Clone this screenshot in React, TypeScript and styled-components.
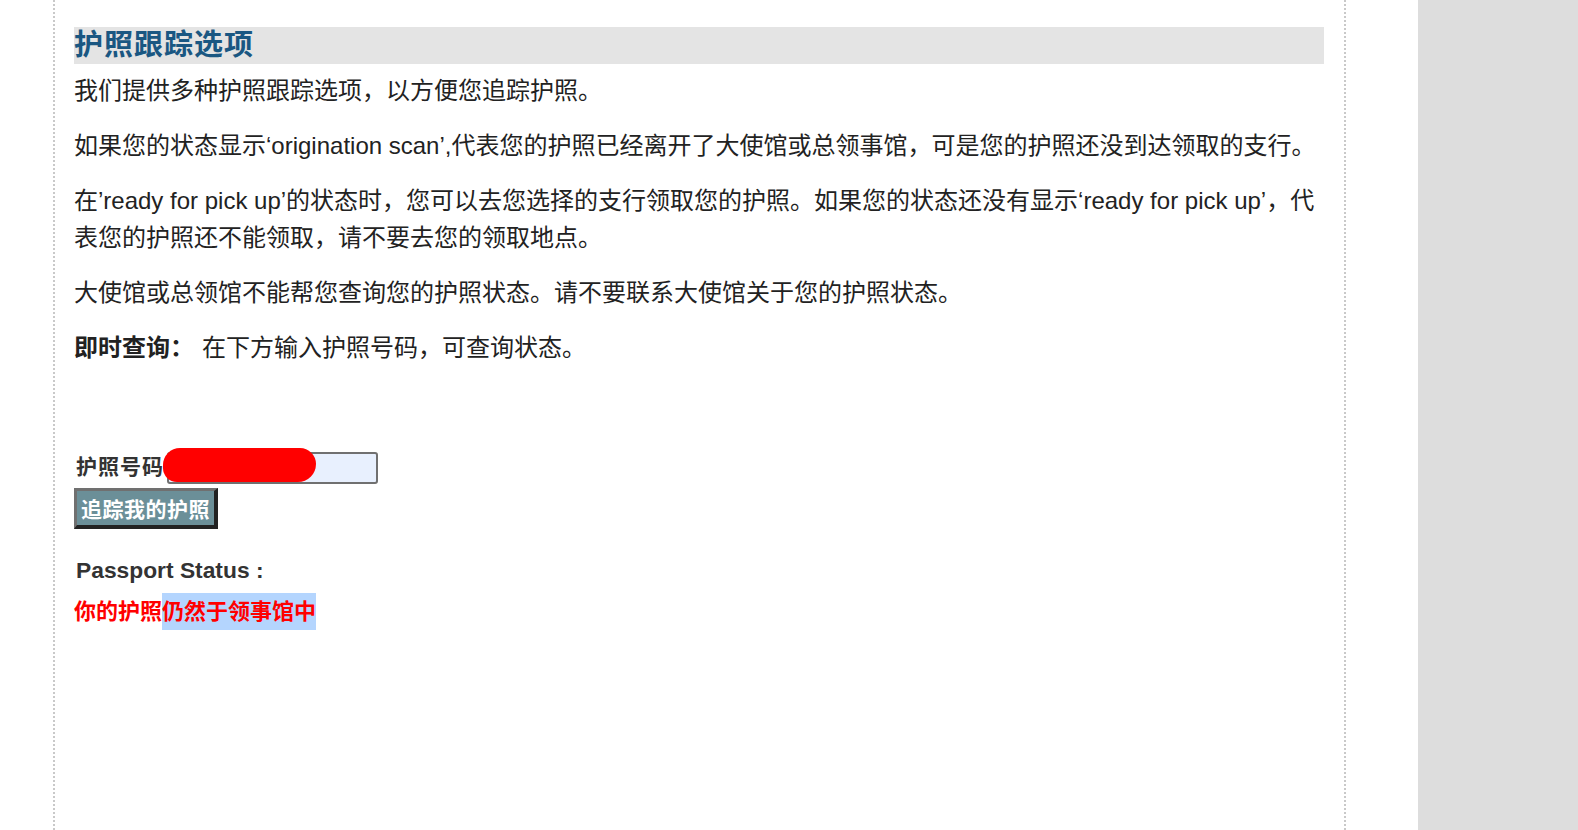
import React from 'react';
import styled, { createGlobalStyle } from 'styled-components';

const GlobalStyle = createGlobalStyle`
  html, body {
    margin: 0;
    padding: 0;
    background: #ffffff;
  }
`;

const cjk = `"Liberation Sans", "Noto Sans CJK SC", sans-serif`;

const Page = styled.div`
  display: grid;
  grid-template-columns: 53px 1293px 1fr 160px;
  height: 830px;
  overflow: hidden;
`;

const Main = styled.main`
  box-sizing: border-box;
  border-left: 2px dotted #c9c9c9;
  border-right: 2px dotted #c9c9c9;
  padding: 27px 20px 0 19px;
  font-family: ${cjk};
  color: #222222;
`;

const SideBar = styled.aside`
  background: #dddddd;
`;

const Heading = styled.h2`
  margin: 0 0 8px;
  height: 37px;
  line-height: 37px;
  background: #e4e4e4;
  color: #1a5782;
  font-size: 29px;
  font-weight: bold;
  letter-spacing: 1px;
`;

const Paragraph = styled.p`
  margin: 0 0 18px;
  font-size: 24px;
  line-height: 37px;
`;

const Strong = styled.b`
  font-weight: bold;
  margin-right: 8px;
`;

const Form = styled.form`
  margin-top: 82px;
  display: flex;
  flex-direction: column;
  align-items: flex-start;
`;

const FieldRow = styled.div`
  display: flex;
  align-items: center;
  padding-left: 2px;
  height: 38px;
`;

const Label = styled.label`
  font-size: 21px;
  font-weight: bold;
  letter-spacing: 1px;
  color: #333333;
  margin: 0 3px 4px 0;
`;

const InputWrap = styled.div`
  position: relative;
  margin-top: 2px;
`;

const Input = styled.input`
  box-sizing: border-box;
  width: 211px;
  height: 32px;
  border: 2px solid #707070;
  border-radius: 3px;
  background: #e8f0fe;
  outline: none;
`;

/* red marker stroke covering the typed passport number */
const Redaction = styled.span`
  position: absolute;
  left: -4px;
  top: -4px;
  width: 153px;
  height: 34px;
  background: #ff0000;
  border-radius: 17px 16px 18px 14px;
`;

const TrackButton = styled.button`
  margin-top: 2px;
  box-sizing: border-box;
  width: 144px;
  height: 41px;
  padding: 0;
  background: #6b8f98;
  border-style: solid;
  border-width: 3px 4px 4px 3px;
  border-color: #707070 #222222 #222222 #707070;
  color: #ffffff;
  font-family: ${cjk};
  font-size: 21px;
  font-weight: bold;
  letter-spacing: 0.5px;
  cursor: pointer;
`;

const StatusTitle = styled.div`
  margin-top: 26px;
  padding-left: 2px;
  font-family: "Liberation Sans", sans-serif;
  font-size: 22.8px;
  font-weight: bold;
  color: #333333;
  line-height: 30px;
`;

const StatusText = styled.div`
  margin-top: 8px;
  font-size: 22px;
  font-weight: bold;
  color: #ff0000;
  line-height: 37px;
  height: 37px;
`;

const Selected = styled.span`
  display: inline-block;
  background: #b4d5fe;
  line-height: 37px;
  vertical-align: top;
`;

export default function App() {
  return (
    <>
      <GlobalStyle />
      <Page>
        <div />
        <Main>
          <Heading>护照跟踪选项</Heading>
          <Paragraph>我们提供多种护照跟踪选项，以方便您追踪护照。</Paragraph>
          <Paragraph>
            如果您的状态显示‘origination scan’,代表您的护照已经离开了大使馆或总领事馆，可是您的护照还没到达领取的支行。
          </Paragraph>
          <Paragraph>
            在’ready for pick up’的状态时，您可以去您选择的支行领取您的护照。如果您的状态还没有显示‘ready for pick up’，代表您的护照还不能领取，请不要去您的领取地点。
          </Paragraph>
          <Paragraph>大使馆或总领馆不能帮您查询您的护照状态。请不要联系大使馆关于您的护照状态。</Paragraph>
          <Paragraph>
            <Strong>即时查询：</Strong>在下方输入护照号码，可查询状态。
          </Paragraph>

          <Form onSubmit={e => e.preventDefault()}>
            <FieldRow>
              <Label htmlFor="passport">护照号码</Label>
              <InputWrap>
                <Input id="passport" type="text" />
                <Redaction />
              </InputWrap>
            </FieldRow>
            <TrackButton type="submit">追踪我的护照</TrackButton>
          </Form>

          <StatusTitle>Passport Status :</StatusTitle>
          <StatusText>
            你的护照<Selected>仍然于领事馆中</Selected>
          </StatusText>
        </Main>
        <div />
        <SideBar />
      </Page>
    </>
  );
}
